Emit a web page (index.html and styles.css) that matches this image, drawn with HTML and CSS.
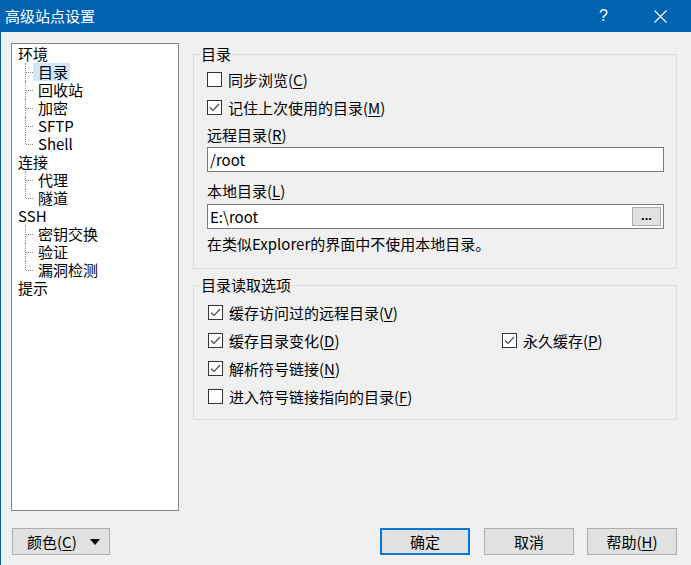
FILE: index.html
```html
<!DOCTYPE html>
<html lang="zh-CN">
<head>
<meta charset="utf-8">
<title>高级站点设置</title>
<link rel="stylesheet" href="styles.css">
</head>
<body>
<div class="window">
  <div class="titlebar">
    <span class="title">高级站点设置</span>
    <span class="help">?</span>
    <span class="close"><svg width="13" height="13" viewBox="0 0 13 13"><path d="M0.5 0.5 L12.5 12.5 M12.5 0.5 L0.5 12.5" stroke="#fff" stroke-width="1.1" fill="none"/></svg></span>
  </div>
  <div class="main">
    <div class="tree">
      <div class="node">环境</div>
      <div class="child"><span class="lbl sel">目录</span></div>
      <div class="child"><span class="lbl">回收站</span></div>
      <div class="child"><span class="lbl">加密</span></div>
      <div class="child"><span class="lbl">SFTP</span></div>
      <div class="child last"><span class="lbl">Shell</span></div>
      <div class="node">连接</div>
      <div class="child"><span class="lbl">代理</span></div>
      <div class="child last"><span class="lbl">隧道</span></div>
      <div class="node">SSH</div>
      <div class="child"><span class="lbl">密钥交换</span></div>
      <div class="child"><span class="lbl">验证</span></div>
      <div class="child last"><span class="lbl">漏洞检测</span></div>
      <div class="node">提示</div>
    </div>
    <div class="panel">
      <fieldset class="group">
        <legend>目录</legend>
        <div class="gbody gbody1">
          <div class="cbrow"><span class="cb"></span><span>同步浏览(<u>C</u>)</span></div>
          <div class="cbrow r2"><span class="cb on"><svg width="13" height="13" viewBox="0 0 13 13"><path d="M2 6.5 L5 9.5 L11 3" stroke="#4a4a4a" stroke-width="1.2" fill="none"/></svg></span><span>记住上次使用的目录(<u>M</u>)</span></div>
          <div class="label l1">远程目录(<u>R</u>)</div>
          <div class="field f1"><span class="val">/root</span></div>
          <div class="label l2">本地目录(<u>L</u>)</div>
          <div class="field f2"><span class="val">E:\root</span><span class="browse">...</span></div>
          <div class="note">在类似Explorer的界面中不使用本地目录。</div>
        </div>
      </fieldset>
      <fieldset class="group g2">
        <legend>目录读取选项</legend>
        <div class="gbody gbody2">
          <div class="cbrow"><span class="cb on"><svg width="13" height="13" viewBox="0 0 13 13"><path d="M2 6.5 L5 9.5 L11 3" stroke="#4a4a4a" stroke-width="1.2" fill="none"/></svg></span><span>缓存访问过的远程目录(<u>V</u>)</span></div>
          <div class="cbrow r2 split">
            <div class="col1"><span class="cb on"><svg width="13" height="13" viewBox="0 0 13 13"><path d="M2 6.5 L5 9.5 L11 3" stroke="#4a4a4a" stroke-width="1.2" fill="none"/></svg></span><span>缓存目录变化(<u>D</u>)</span></div>
            <div class="col2"><span class="cb on"><svg width="13" height="13" viewBox="0 0 13 13"><path d="M2 6.5 L5 9.5 L11 3" stroke="#4a4a4a" stroke-width="1.2" fill="none"/></svg></span><span>永久缓存(<u>P</u>)</span></div>
          </div>
          <div class="cbrow r2"><span class="cb on"><svg width="13" height="13" viewBox="0 0 13 13"><path d="M2 6.5 L5 9.5 L11 3" stroke="#4a4a4a" stroke-width="1.2" fill="none"/></svg></span><span>解析符号链接(<u>N</u>)</span></div>
          <div class="cbrow r2"><span class="cb"></span><span>进入符号链接指向的目录(<u>F</u>)</span></div>
        </div>
      </fieldset>
    </div>
  </div>
  <div class="footer">
    <div class="btn color"><span>颜色(<u>C</u>)</span><span class="tri"></span></div>
    <div class="btn ok">确定</div>
    <div class="btn cancel">取消</div>
    <div class="btn helpbtn">帮助(<u>H</u>)</div>
  </div>
</div>
</body>
</html>
```
FILE: styles.css
```css
* { box-sizing: border-box; }
html, body { margin: 0; padding: 0; }
body {
  font-family: "Noto Sans CJK SC", "Noto Sans", sans-serif;
  font-size: 15px;
  color: #000;
  background: #f0f0f0;
}
.window {
  width: 691px;
  height: 565px;
  border-left: 1px solid #0063b1;
  background: #f0f0f0;
  display: flex;
  flex-direction: column;
  overflow: hidden;
}
.titlebar {
  height: 32px;
  background: #0063b1;
  color: #fff;
  display: flex;
  align-items: center;
  padding-left: 4px;
  flex: none;
}
.title { font-size: 15px; line-height: 18px; }
.help { margin-left: auto; font-size: 16px; font-family: "Liberation Sans", sans-serif; margin-right: 46px; }
.close { width: 13px; height: 13px; margin-right: 24px; display: flex; }
.main {
  display: flex;
  padding-left: 10px;
  height: 479px;
  flex: none;
}
.tree {
  margin-top: 11px;
  width: 168px;
  height: 468px;
  background: #fff;
  border: 1px solid #828790;
  padding-top: 1px;
}
.node {
  height: 18px;
  line-height: 18px;
  padding-left: 6px;
  white-space: nowrap;
}
.child {
  position: relative;
  height: 18px;
  line-height: 18px;
  padding-left: 21px;
  white-space: nowrap;
}
.child::before {
  content: "";
  position: absolute;
  left: 13px;
  top: 0;
  bottom: 0;
  border-left: 1px dotted #8c8c8c;
}
.child.last::before { bottom: 9px; }
.child::after {
  content: "";
  position: absolute;
  left: 14px;
  top: 9px;
  width: 7px;
  border-top: 1px dotted #8c8c8c;
}
.lbl {
  display: inline-block;
  height: 18px;
  padding: 0 2px 0 5px;
}
.lbl.sel { background: #cce8ff; }
.panel {
  margin-left: 14px;
  width: 484px;
  padding-top: 14px;
}
.group {
  margin: 0;
  padding: 0;
  border: 1px solid #dcdcdc;
  min-width: 0;
}
.group legend {
  margin-left: 6px;
  padding: 0 1px;
  line-height: 16px;
  height: 16px;
}
.g2 { margin-top: 8px; }
.gbody1 { padding: 7px 12px 15px 13px; }
.gbody2 { padding: 9px 12px 13px 14px; }
.cbrow {
  display: flex;
  align-items: center;
  height: 20px;
  white-space: nowrap;
}
.cbrow.r2 { margin-top: 8px; }
.col1, .col2 { display: flex; align-items: center; }
.col1 { width: 294px; }
.cb {
  width: 15px;
  height: 15px;
  border: 1px solid #333;
  background: #fff;
  margin-right: 6px;
  flex: none;
  display: flex;
  align-items: center;
  justify-content: center;
}
u { text-decoration: underline; text-underline-offset: 2px; }
.label { height: 18px; line-height: 18px; }
.l1 { margin-top: 9px; }
.l2 { margin-top: 10px; }
.field {
  height: 25px;
  background: #fff;
  border: 1px solid #7a7a7a;
  display: flex;
  align-items: center;
  padding-left: 2px;
}
.f1 { margin-top: 3px; }
.f2 { margin-top: 4px; }
.val { flex: 1; line-height: 18px; }
.browse {
  width: 29px;
  height: 19px;
  margin-right: 2px;
  background: #e1e1e1;
  border: 1px solid #adadad;
  font-size: 13px;
  font-weight: bold;
  line-height: 16px;
  text-align: center;
  font-family: "Liberation Sans", sans-serif;
}
.note { margin-top: 6px; height: 18px; line-height: 18px; white-space: nowrap; }
.footer {
  display: flex;
  padding: 17px 14px 0 11px;
}
.btn {
  height: 27px;
  width: 90px;
  background: #e1e1e1;
  border: 1px solid #adadad;
  display: flex;
  align-items: center;
  justify-content: center;
  line-height: 18px;
}
.btn.color { width: 98px; justify-content: space-between; padding: 0 9px 0 14px; }
.tri {
  width: 0;
  height: 0;
  border-left: 5px solid transparent;
  border-right: 5px solid transparent;
  border-top: 6px solid #000;
}
.btn.ok { margin-left: auto; border: 2px solid #0078d7; }
.btn.cancel { margin-left: 14px; }
.btn.helpbtn { margin-left: 13px; }
```
